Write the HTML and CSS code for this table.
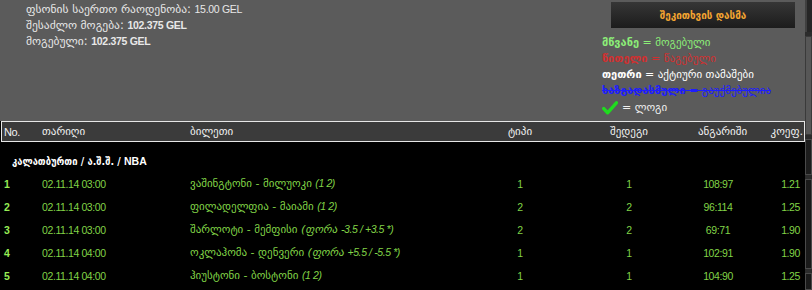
FILE: index.html
```html
<!DOCTYPE html>
<html lang="ka">
<head>
<meta charset="utf-8">
<title>ბილეთი</title>
<link rel="stylesheet" href="styles.css">
</head>
<body>
<div class="page">
  <div class="main">
    <div class="top">
      <div class="summary">
        <div>ფსონის საერთო რაოდენობა: <span class="lat">15.00 GEL</span></div>
        <div>შესაძლო მოგება: <b class="lat">102.375 GEL</b></div>
        <div>მოგებული: <b class="lat">102.375 GEL</b></div>
      </div>
      <div class="side">
        <button class="check-btn">შეკითხვის დასმა</button>
        <ul class="legend">
          <li class="lg-green"><b>მწვანე</b> = მოგებული</li>
          <li class="lg-red"><b>წითელი</b> = წაგებული</li>
          <li class="lg-white"><b>თეთრი</b> = აქტიური თამაშები</li>
          <li class="lg-blue"><b>ხაზგადასმული</b> = გაუქმებულია</li>
          <li class="lg-check"><svg class="tick" width="16" height="14" viewBox="0 0 16 14"><path d="M1.8 7.6 L5.6 11.8 L14.4 1.8" fill="none" stroke="#1fdc1f" stroke-width="3.4" stroke-linecap="round" stroke-linejoin="round"/></svg> = ლოგი</li>
        </ul>
      </div>
    </div>
    <div class="thead">
      <div class="grid">
        <span class="lat">No.</span>
        <span>თარიღი</span>
        <span>ბილეთი</span>
        <span class="c">ტიპი</span>
        <span class="c">შედეგი</span>
        <span class="c">ანგარიში</span>
        <span class="r hc">კოეფ.</span>
      </div>
    </div>
    <div class="tbody">
      <div class="cat">კალათბურთი / ა.შ.შ. / <span class="lat">NBA</span></div>
      <div class="grid row">
        <span class="n lat">1</span><span class="lat">02.11.14 03:00</span><span>ვაშინგტონი - მილუოკი <i class="lat">(1 2)</i></span><span class="c lat">1</span><span class="c lat">1</span><span class="c lat">108:97</span><span class="r lat">1.21</span>
      </div>
      <div class="grid row">
        <span class="n lat">2</span><span class="lat">02.11.14 03:00</span><span>ფილადელფია - მაიამი <i class="lat">(1 2)</i></span><span class="c lat">2</span><span class="c lat">2</span><span class="c lat">96:114</span><span class="r lat">1.25</span>
      </div>
      <div class="grid row">
        <span class="n lat">3</span><span class="lat">02.11.14 03:00</span><span>შარლოტი - მემფისი <i>(ფორა <span class="lat">-3.5 / +3.5 *)</span></i></span><span class="c lat">2</span><span class="c lat">2</span><span class="c lat">69:71</span><span class="r lat">1.90</span>
      </div>
      <div class="grid row">
        <span class="n lat">4</span><span class="lat">02.11.14 04:00</span><span>ოკლაჰომა - დენვერი <i>(ფორა <span class="lat">+5.5 / -5.5 *)</span></i></span><span class="c lat">1</span><span class="c lat">1</span><span class="c lat">102:91</span><span class="r lat">1.90</span>
      </div>
      <div class="grid row">
        <span class="n lat">5</span><span class="lat">02.11.14 04:00</span><span>ჰიუსტონი - ბოსტონი <i class="lat">(1 2)</i></span><span class="c lat">1</span><span class="c lat">1</span><span class="c lat">104:90</span><span class="r lat">1.25</span>
      </div>
    </div>
  </div>
  <div class="rail">
    <div class="rail-a"></div>
    <div class="rail-b"></div>
    <div class="rail-c"></div>
    <div class="rail-d"></div>
    <div class="rail-e"></div>
  </div>
</div>
</body>
</html>
```
FILE: styles.css
```css
* { box-sizing: border-box; }
html, body { margin: 0; padding: 0; background: #000; }
body {
  font-family: "DejaVu Sans", sans-serif;
  font-size: 11px;
  color: #e8e8e8;
}
.lat {
  font-family: "Liberation Sans", Arial, sans-serif;
  font-size: 10.5px;
  letter-spacing: -0.4px;
}
.page { display: flex; width: 812px; height: 290px; overflow: hidden; }
.main { width: 805px; display: flex; flex-direction: column; background: #000; }
.top {
  background: #5b5b5b;
  height: 121px;
  display: flex;
  justify-content: space-between;
}
.summary { padding: 1px 0 0 26px; line-height: 16px; font-size: 11.5px; }
.summary .lat { font-size: 10.5px; letter-spacing: -0.3px; }
.summary b { font-weight: bold; }
.side { width: 203px; padding-top: 2px; }
.check-btn {
  display: block;
  margin-left: 9px;
  width: 184px;
  height: 26px;
  border: 0;
  padding: 0;
  background: linear-gradient(#363636, #1c1c1c);
  color: #f4a531;
  font-family: "DejaVu Sans Condensed", "DejaVu Sans", sans-serif;
  font-size: 11px;
  font-weight: bold;
}
.legend { list-style: none; margin: 7px 0 0; padding: 0; line-height: 16px; }
.lg-green { color: #8cee78; }
.lg-red { color: #d03030; }
.lg-white { color: #ffffff; }
.lg-blue { color: #1d1dff; text-decoration: line-through; }
.lg-check { color: #f0f0f0; display: flex; align-items: center; gap: 4px; height: 18px; }
.tick { display: block; }
.thead {
  margin-left: 1px;
  height: 21px;
  border: 1px solid #e6e6e6;
  background: #3b3b3b;
  padding: 0 3px 0 2px;
  color: #f0f0f0;
}
.thead .grid { height: 19px; align-items: center; }
.thead .lat { font-size: 11px; }
.grid {
  display: grid;
  grid-template-columns: 38px 148px 290px 80px 138px 40px 62px;
  white-space: nowrap;
}
.c { text-align: center; }
.r { text-align: right; }
.hc { margin-right: -3px; }
.tbody { padding-left: 4px; }
.cat {
  color: #fff;
  font-family: "DejaVu Sans Condensed", "DejaVu Sans", sans-serif;
  font-size: 10.5px;
  font-weight: bold;
  height: 30px;
  padding: 11px 0 0 8px;
  line-height: 16px;
}
.cat .lat { font-size: 10.5px; letter-spacing: 0; }
.row { height: 23px; align-items: center; color: #80d447; }
.row .n { font-weight: bold; color: #96ec55; }
.row i { font-style: italic; }
.rail { width: 7px; background: #2c2c2c; display: flex; flex-direction: column; gap: 4px; }
.rail-a { height: 32px; background: #262626; border-left: 2px solid #404040; }
.rail-b { height: 99px; background: #575757; border: 1px solid #3a3a3a; }
.rail-c { height: 36px; background: #1d1d1d; border: 1px solid #4a4a4a; }
.rail-d { height: 90px; background: #1a1a1a; border: 1px solid #4a4a4a; }
.rail-e { flex: 1; background: #1a1a1a; border: 1px solid #4a4a4a; }
```
